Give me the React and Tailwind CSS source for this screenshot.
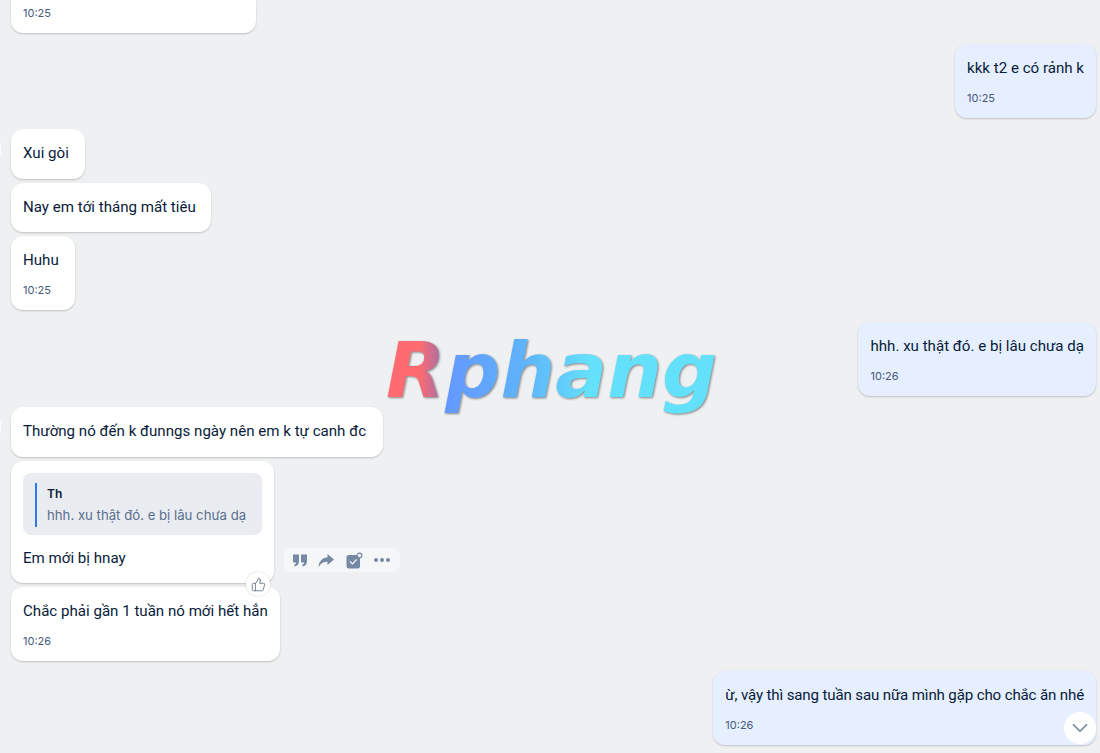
import { ChevronDown, ThumbsUp } from 'lucide-react';

const FONT = "font-['Roboto','Noto_Sans',sans-serif]";

const Bubble = ({ mine, time, className, children }) => (
  <div
    className={`${className || ''} rounded-xl p-3 text-[15.1px] leading-[25.5px] text-[#081b3a] shadow-[0_1px_2px_rgba(0,0,0,0.2)] ${
      mine ? 'bg-[#e5efff]' : 'bg-white'
    }`}
  >
    {children}
    {time && <div className="mt-[7.5px] mb-[-1px] font-['Inter'] text-[11px] leading-[18px] text-[#47597a]">{time}</div>}
  </div>
);

const HoverActions = () => (
  <div className="mb-[11px] ml-[10px] flex h-6 w-[116px] items-center justify-between rounded-md bg-[#f4f6f8] pr-[10px] pl-[9px] text-[#7589a3]">
    {/* quote */}
    <svg width="14" height="13" viewBox="0 0 14 13" fill="currentColor">
      <path d="M0 0.5h6v6.5c0 3-1.5 5-4.2 5.5l-0.8-1.6c1.300-0.400 2-1.300 2.100-2.400H0z" />
      <path d="M8 0.500h6v6.500c0 3-1.500 5-4.200 5.500L9 10.900c1.300-0.400 2-1.300 2.100-2.400H8z" />
    </svg>
    {/* forward */}
    <svg width="16" height="13" viewBox="0 0 16 13" fill="currentColor">
      <path d="M9.500 0L16 5.500 9.500 11V7.800C5.500 7.600 2.600 9.500 0.500 13 0.800 7.800 4 3.900 9.500 3.300z" />
    </svg>
    {/* todo */}
    <svg width="17" height="17" viewBox="0 0 17 17" fill="none">
      <rect x="0.500" y="3" width="13.500" height="13.500" rx="2.500" fill="currentColor" />
      <path d="M4 9.500l2.500 2.500 4-4.500" stroke="#f4f6f8" strokeWidth="1.200" />
      <circle cx="13.500" cy="3.500" r="2.400" fill="#f4f6f8" stroke="currentColor" strokeWidth="1.200" />
    </svg>
    {/* more */}
    <svg width="16" height="4" viewBox="0 0 16 4" fill="currentColor">
      <circle cx="2" cy="2" r="2" />
      <circle cx="8" cy="2" r="2" />
      <circle cx="14" cy="2" r="2" />
    </svg>
  </div>
);

const App = () => {
  return (
    <div className={`${FONT} relative flex h-[753px] w-[1100px] flex-col overflow-hidden bg-[#eef0f1] pl-[11px] pr-1`}>
      {/* cut off message at the top */}
      <div className="h-[33px] w-[245px] shrink-0 rounded-b-xl bg-white px-3 pt-[4px] font-['Inter'] text-[11px] leading-[18px] text-[#47597a] shadow-[0_1px_2px_rgba(0,0,0,0.2)]">
        10:25
      </div>

      <div className="mt-[11px] self-end">
        <Bubble mine time="10:25">kkk t2 e có rảnh k</Bubble>
      </div>

      <div className="mt-[11px] flex flex-col items-start gap-1">
        <Bubble className="w-[74px]">Xui gòi</Bubble>
        <Bubble className="w-[200px]">Nay em tới tháng mất tiêu</Bubble>
        <Bubble className="w-[64px]" time="10:25">Huhu</Bubble>
      </div>

      <div className="mt-[11.5px] self-end">
        <Bubble mine time="10:26">hhh. xu thật đó. e bị lâu chưa dạ</Bubble>
      </div>

      <div className="mt-[11.5px] flex flex-col items-start gap-1">
        <Bubble className="w-[372px]">Thường nó đến k đunngs ngày nên em k tự canh đc</Bubble>
        <div className="flex items-end">
          <div className="relative">
            <Bubble>
              <div className="mb-[11px] w-[239px] rounded-lg bg-[#e9ecf0] px-3 py-[10px]">
                <div className="border-l-2 border-[#2b7bf0] pl-[10px]">
                  <div className="font-['Inter'] text-xs leading-[21px] font-semibold text-[#081b3a]">Th</div>
                  <div className="mb-[-2px] font-['Inter'] text-[13.2px] leading-[23px] text-[#5a6f8f]">hhh. xu thật đó. e bị lâu chưa dạ</div>
                </div>
              </div>
              Em mới bị hnay
            </Bubble>
            <div className="absolute right-[4px] bottom-[-13px] z-10 flex h-6 w-6 items-center justify-center rounded-full bg-white shadow-[0_0_2px_rgba(0,0,0,0.2)]">
              <ThumbsUp size={15} strokeWidth={1.300} className="text-[#5c6b7f]" />
            </div>
          </div>
          <HoverActions />
        </div>
        <Bubble time="10:26">Chắc phải gần 1 tuần nó mới hết hẳn</Bubble>
      </div>

      <div className="mt-[10px] self-end">
        <Bubble mine time="10:26">
          <span className="mb-[2px] block tracking-[-0.15px]">ừ, vậy thì sang tuần sau nữa mình gặp cho chắc ăn nhé</span>
        </Bubble>
      </div>

      {/* clipped avatars at the left edge */}
      <div className="absolute top-[143px] left-0 h-3 w-px bg-white/70" />
      <div className="absolute top-[421px] left-0 h-3 w-px bg-white/70" />

      {/* watermark */}
      <div className="pointer-events-none absolute top-[321px] left-[386px] font-['DejaVu_Sans'] text-[77px] leading-[100px] font-bold italic">
        <span className="bg-[linear-gradient(90deg,#ff6b70_0%,#ff6b70_10%,#b070a0_16%,#6498ff_18%,#5fb4fb_42%,#64e1fa_62%)] bg-clip-text text-transparent drop-shadow-[1px_1px_1px_rgba(0,0,0,0.45)]">
          Rphang
        </span>
      </div>

      {/* scroll to bottom */}
      <button className="absolute top-[712px] left-[1064px] flex h-8 w-8 items-center justify-center rounded-full bg-white text-[#7589a3]">
        <ChevronDown size={26} strokeWidth={1.600} />
      </button>
    </div>
  );
};

export default App;
